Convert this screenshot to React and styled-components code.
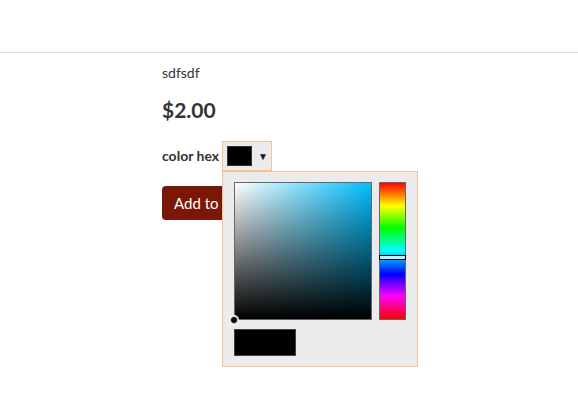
import React from "react";
import styled, { createGlobalStyle } from "styled-components";

const Global = createGlobalStyle`
  html, body { margin: 0; padding: 0; background: #fff; }
  body { font-family: Lato, "Open Sans", sans-serif; color: #333; }
`;

const Page = styled.div`
  min-height: 416px;
`;

const Header = styled.header`
  height: 52px;
  border-bottom: 1px solid #dddddd;
`;

const Content = styled.main`
  padding: 10px 0 0 162px;
  display: flex;
  flex-direction: column;
  align-items: flex-start;
`;

const Title = styled.div`
  font-size: 14px;
  line-height: 20px;
`;

const Price = styled.div`
  margin-top: 14px;
  font-size: 21px;
  font-weight: 700;
  line-height: 26px;
`;

const OptionRow = styled.div`
  margin-top: 18px;
  display: flex;
  align-items: center;
`;

const Label = styled.span`
  font-size: 14px;
  font-weight: 700;
  margin-right: 3px;
  position: relative;
  top: -1px;
`;

const PickerWrap = styled.div`
  position: relative;
`;

const SwatchButton = styled.div`
  box-sizing: border-box;
  width: 50px;
  height: 30px;
  background: #ebebeb;
  border: 1px solid #f3c391;
  display: flex;
  align-items: center;
  padding-left: 4px;
  gap: 6px;
`;

const Swatch = styled.div`
  box-sizing: border-box;
  width: 25px;
  height: 20px;
  background: ${(p) => p.color};
  border: 1px solid #333;
`;

const Arrow = styled.span`
  font-size: 10px;
  color: #111a33;
  line-height: 1;
`;

const Popup = styled.div`
  position: absolute;
  left: 0;
  top: 30px;
  z-index: 2;
  box-sizing: border-box;
  width: 196px;
  background: #ebebeb;
  border: 1px solid #f3c391;
  padding: 10px 11px 10px 11px;
  display: flex;
  flex-direction: column;
  gap: 9px;
`;

const PickerTop = styled.div`
  display: flex;
  gap: 7px;
`;

const SVArea = styled.div`
  position: relative;
  box-sizing: border-box;
  width: 138px;
  height: 138px;
  border: 1px solid #666;
  background: linear-gradient(to top, #000, rgba(0, 0, 0, 0)),
    linear-gradient(to right, #fff, ${(p) => p.hue});
`;

const SVMarker = styled.div`
  position: absolute;
  left: -5px;
  bottom: -5px;
  width: 6px;
  height: 6px;
  border-radius: 50%;
  background: #000;
  border: 1px solid #ccc;
  box-shadow: 0 0 0 1px #fff;
`;

const HueBar = styled.div`
  position: relative;
  box-sizing: border-box;
  width: 27px;
  height: 138px;
  border: 1px solid #666;
  background: linear-gradient(
    to bottom,
    #f00 0%,
    #ff0 17%,
    #0f0 33%,
    #0ff 50%,
    #00f 67%,
    #f0f 83%,
    #f00 100%
  );
`;

const HueMarker = styled.div`
  position: absolute;
  left: -1px;
  right: -1px;
  box-sizing: border-box;
  height: 5px;
  border: 1px solid #000;
  background: #c8ecff;
`;

const Preview = styled.div`
  box-sizing: border-box;
  width: 62px;
  height: 27px;
  background: ${(p) => p.color};
  border: 1px solid #444;
`;

const AddButton = styled.button`
  margin-top: 15px;
  height: 34px;
  padding: 0 12px;
  border: none;
  border-radius: 4px;
  background: #7b1706;
  color: #fff;
  font-family: Lato, "Open Sans", sans-serif;
  font-size: 15px;
  cursor: pointer;
`;

export default function App() {
  const hueTop = 72;
  return (
    <Page>
      <Global />
      <Header />
      <Content>
        <Title>sdfsdf</Title>
        <Price>$2.00</Price>
        <OptionRow>
          <Label>color hex</Label>
          <PickerWrap>
            <SwatchButton>
              <Swatch color="#000" />
              <Arrow>▼</Arrow>
            </SwatchButton>
            <Popup>
              <PickerTop>
                <SVArea hue="rgb(0, 190, 255)">
                  <SVMarker />
                </SVArea>
                <HueBar>
                  <HueMarker style={{ top: hueTop }} />
                </HueBar>
              </PickerTop>
              <Preview color="#000" />
            </Popup>
          </PickerWrap>
        </OptionRow>
        <AddButton>Add to cart</AddButton>
      </Content>
    </Page>
  );
}
